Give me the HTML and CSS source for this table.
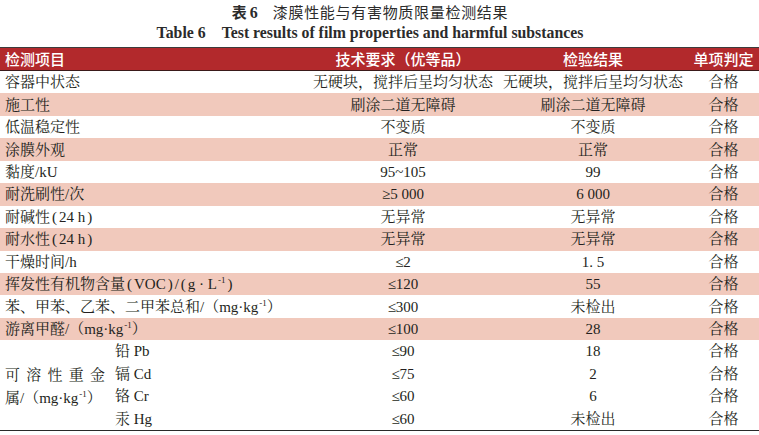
FILE: index.html
```html
<!DOCTYPE html>
<html lang="zh-CN">
<head>
<meta charset="utf-8">
<title>表6 漆膜性能与有害物质限量检测结果</title>
<link rel="stylesheet" href="styles.css">
</head>
<body>
<div class="caption">
  <div class="cap-zh"><span class="cap-no">表<span class="num">6</span></span><span class="cap-title">漆膜性能与有害物质限量检测结果</span></div>
  <div class="cap-en"><span class="cap-en-no">Table 6</span>Test results of film properties and harmful substances</div>
</div>
<div class="table">
  <div class="row head">
    <div class="c1">检测项目</div>
    <div class="c2">技术要求（优等品）</div>
    <div class="c3">检验结果</div>
    <div class="c4">单项判定</div>
  </div>
  <div class="row">
    <div class="c1">容器中状态</div>
    <div class="c2">无硬块，搅拌后呈均匀状态</div>
    <div class="c3">无硬块，搅拌后呈均匀状态</div>
    <div class="c4">合格</div>
  </div>
  <div class="row alt">
    <div class="c1">施工性</div>
    <div class="c2">刷涂二道无障碍</div>
    <div class="c3">刷涂二道无障碍</div>
    <div class="c4">合格</div>
  </div>
  <div class="row">
    <div class="c1">低温稳定性</div>
    <div class="c2">不变质</div>
    <div class="c3">不变质</div>
    <div class="c4">合格</div>
  </div>
  <div class="row alt">
    <div class="c1">涂膜外观</div>
    <div class="c2">正常</div>
    <div class="c3">正常</div>
    <div class="c4">合格</div>
  </div>
  <div class="row">
    <div class="c1">黏度/kU</div>
    <div class="c2">95~105</div>
    <div class="c3">99</div>
    <div class="c4">合格</div>
  </div>
  <div class="row alt">
    <div class="c1">耐洗刷性/次</div>
    <div class="c2">≥5 000</div>
    <div class="c3">6 000</div>
    <div class="c4">合格</div>
  </div>
  <div class="row">
    <div class="c1">耐碱性<span class="pa">(</span>24 h<span class="pa">)</span></div>
    <div class="c2">无异常</div>
    <div class="c3">无异常</div>
    <div class="c4">合格</div>
  </div>
  <div class="row alt">
    <div class="c1">耐水性<span class="pa">(</span>24 h<span class="pa">)</span></div>
    <div class="c2">无异常</div>
    <div class="c3">无异常</div>
    <div class="c4">合格</div>
  </div>
  <div class="row">
    <div class="c1">干燥时间/h</div>
    <div class="c2">≤2</div>
    <div class="c3">1. 5</div>
    <div class="c4">合格</div>
  </div>
  <div class="row alt">
    <div class="c1">挥发性有机物含量<span class="pa">(</span>VOC<span class="pa">)</span>/<span class="pa">(</span>g · L<sup>-1</sup><span class="pa">)</span></div>
    <div class="c2">≤120</div>
    <div class="c3">55</div>
    <div class="c4">合格</div>
  </div>
  <div class="row">
    <div class="c1">苯、甲苯、乙苯、二甲苯总和/（mg·kg<sup>-1</sup>）</div>
    <div class="c2">≤300</div>
    <div class="c3">未检出</div>
    <div class="c4">合格</div>
  </div>
  <div class="row alt">
    <div class="c1">游离甲醛/（mg·kg<sup>-1</sup>）</div>
    <div class="c2">≤100</div>
    <div class="c3">28</div>
    <div class="c4">合格</div>
  </div>
  <div class="group">
    <div class="g-label">
      <div class="g-line1"><span>可</span><span>溶</span><span>性</span><span>重</span><span>金</span></div>
      <div class="g-line2">属/（mg·kg<sup>-1</sup>）</div>
    </div>
    <div class="sub">铅 Pb</div><div class="c2">≤90</div><div class="c3">18</div><div class="c4">合格</div>
    <div class="sub">镉 Cd</div><div class="c2">≤75</div><div class="c3">2</div><div class="c4">合格</div>
    <div class="sub">铬 Cr</div><div class="c2">≤60</div><div class="c3">6</div><div class="c4">合格</div>
    <div class="sub">汞 Hg</div><div class="c2">≤60</div><div class="c3">未检出</div><div class="c4">合格</div>
  </div>
</div>
</body>
</html>
```

FILE: styles.css
```css
* { box-sizing: border-box; }
html, body { margin: 0; padding: 0; background: #ffffff; }
body {
  width: 759px;
  height: 435px;
  overflow: hidden;
  color: #231f20;
  font-family: "Liberation Serif", "Noto Serif CJK SC", "Noto Sans CJK SC", serif;
  font-size: 15px;
}

.caption {
  width: 740px;
  text-align: center;
  padding-top: 1px;
}
.cap-zh {
  height: 21px;
  line-height: 21px;
  font-family: "Noto Sans CJK SC", sans-serif;
  font-size: 15px;
  color: #2b2b2b;
}
.cap-no { font-weight: 700; margin-right: 15px; }
.cap-no .num { font-family: "Liberation Serif", serif; font-weight: 700; font-size: 16px; margin-left: 3px; }
.cap-title { letter-spacing: 0.7px; }
.cap-en {
  height: 22px;
  line-height: 22px;
  font-family: "Liberation Serif", serif;
  font-weight: 700;
  font-size: 15.8px;
  color: #2b2b2b;
}
.cap-en-no { margin-right: 16px; }

.table {
  margin-top: 3px;
  border-top: 1.5px solid #3c3c3c;
  border-bottom: 1.5px solid #2a2a2a;
  width: 759px;
}

.row {
  display: grid;
  grid-template-columns: 308px 190px 190px 71px;
  height: 22.44px;
  align-items: center;
  line-height: 22px;
  white-space: nowrap;
}
.row.alt { background: #f1c9bc; }
.row.head {
  background: #b2292c;
  color: #ffffff;
  font-family: "Noto Sans CJK SC", sans-serif;
  font-weight: 500;
  border-bottom: 1px solid #3a1a1a;
  height: 23px;
}
.c1 { padding-left: 5px; }
.c2, .c3, .c4 { text-align: center; }

.pa { margin: 0 2px; }

sup {
  font-size: 9px;
  line-height: 0;
  vertical-align: 6px;
  margin-left: 1px;
}

.group {
  display: grid;
  grid-template-columns: 107px 201px 190px 190px 71px;
  grid-auto-rows: 22.44px;
  align-items: center;
  line-height: 22px;
  white-space: nowrap;
}
.g-label {
  grid-row: 1 / span 4;
  grid-column: 1;
  padding-left: 5px;
  padding-top: 3px;
  line-height: 23px;
}
.g-line1 {
  display: flex;
  justify-content: space-between;
  width: 100px;
}
.sub { grid-column: 2; padding-left: 8px; }
.group .c2 { grid-column: 3; }
.group .c3 { grid-column: 4; }
.group .c4 { grid-column: 5; }
```
